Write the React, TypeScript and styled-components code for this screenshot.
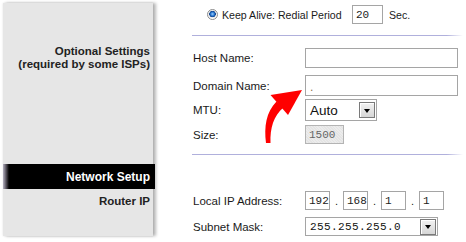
import React from "react";
import styled, { createGlobalStyle } from "styled-components";

const Global = createGlobalStyle`
  html, body { margin: 0; padding: 0; background: #ffffff; }
  body { font-family: "Liberation Sans", Arial, sans-serif; }
`;

const Page = styled.div`
  position: relative;
  display: flex;
  width: 466px;
  height: 242px;
  overflow: hidden;
  background: #ffffff;
`;

const Sidebar = styled.div`
  width: 150px;
  margin: 3px 0 6px 3px;
  padding-top: 42px;
  box-sizing: border-box;
  background: #e6e6e6;
  box-shadow: 0 0 2px rgba(0, 0, 0, 0.12), 3px 0 3px rgba(0, 0, 0, 0.28);
  display: flex;
  flex-direction: column;
`;

const SideTitle = styled.div<{ $top?: number }>`
  margin-top: ${(p) => p.$top ?? 0}px;
  padding-right: 3px;
  text-align: right;
  font-weight: bold;
  font-size: 11.5px;
  line-height: 13px;
  color: #222;
`;

const SectionBar = styled.div<{ $top: number }>`
  margin-top: ${(p) => p.$top}px;
  margin-right: -2px;
  height: 25px;
  display: flex;
  align-items: center;
  justify-content: flex-end;
  padding-right: 5px;
  background: linear-gradient(to right, #b4b0c0 0, #5a5660 3px, #000 6px);
  color: #fff;
  font-weight: bold;
  font-size: 12px;
`;

const Main = styled.div`
  flex: 1;
  padding: 0 3px 0 39px;
  display: flex;
  flex-direction: column;
`;

const Row = styled.div<{ $top: number; $h: number; $indent?: number; $fs?: number }>`
  margin-top: ${(p) => p.$top}px;
  height: ${(p) => p.$h}px;
  padding-left: ${(p) => p.$indent ?? 1}px;
  display: flex;
  align-items: center;
  font-size: ${(p) => p.$fs ?? 11.5}px;
  color: #1a1a1a;
`;

const Divider = styled.div<{ $top: number }>`
  margin-top: ${(p) => p.$top}px;
  height: 1px;
  background: linear-gradient(to right, #b0b0dc 0, #b0b0dc 94%, #ffffff 100%);
`;

const Label = styled.span<{ $w: number }>`
  width: ${(p) => p.$w}px;
  flex-shrink: 0;
  white-space: nowrap;
`;

const Radio = styled.span`
  width: 11px;
  height: 11px;
  box-sizing: border-box;
  border-radius: 50%;
  border: 1px solid #8c8c8c;
  background: radial-gradient(circle at 50% 45%, #9ed0ff 0, #2a78d0 28%, #0c3e8a 45%, #e8e8e8 52%, #ffffff 70%);
  margin-right: 4px;
  flex-shrink: 0;
`;

const TextBox = styled.div<{ $w: number; $h: number; $disabled?: boolean }>`
  width: ${(p) => p.$w}px;
  height: ${(p) => p.$h}px;
  box-sizing: border-box;
  border: 1px solid ${(p) => (p.$disabled ? "#b4b4b4" : "#a5a5a5")};
  background: ${(p) =>
    p.$disabled
      ? "repeating-linear-gradient(45deg, #e4e4e4 0, #e4e4e4 1px, #ececec 1px, #ececec 2px)"
      : "#ffffff"};
  display: flex;
  align-items: center;
  padding-left: 3px;
  flex-shrink: 0;
  font-family: "Liberation Mono", "Courier New", monospace;
  font-size: 11px;
  color: ${(p) => (p.$disabled ? "#666" : "#222")};
`;

const SmallDot = styled.span`
  font-size: 9px;
  color: #8a6a40;
  margin-top: 6px;
`;

const After = styled.span<{ $gap: number }>`
  margin-left: ${(p) => p.$gap}px;
`;

const Select = styled.div<{ $w: number; $h: number; $mono?: boolean }>`
  width: ${(p) => p.$w}px;
  height: ${(p) => p.$h}px;
  box-sizing: border-box;
  border: 1px solid #a5a5a5;
  background: #fff;
  display: flex;
  align-items: center;
  justify-content: space-between;
  padding: 0 1px 0 4px;
  font-family: ${(p) =>
    p.$mono ? `"Liberation Mono", "Courier New", monospace` : `"Liberation Sans", Arial, sans-serif`};
  font-size: ${(p) => (p.$mono ? 11 : 13.5)}px;
  letter-spacing: ${(p) => (p.$mono ? 0.4 : 0)}px;
  color: #111;
`;

const DropButton = styled.span`
  width: 16px;
  height: 16px;
  box-sizing: border-box;
  border: 1px solid #7a7a7a;
  background: linear-gradient(#f2f2f2, #d6d6d6);
  box-shadow: inset 1px 1px 0 #fff;
  display: flex;
  align-items: center;
  justify-content: center;
`;

const Triangle = styled.span`
  width: 0;
  height: 0;
  border-left: 3.5px solid transparent;
  border-right: 3.5px solid transparent;
  border-top: 4px solid #000;
  margin-top: 1px;
`;

const IpDot = styled.span`
  width: 13px;
  text-align: center;
  font-size: 11px;
`;

const Arrow = styled.svg`
  position: absolute;
  left: 0;
  top: 0;
  pointer-events: none;
`;

const ipParts = ["192", "168", "1", "1"];

export default function App() {
  return (
    <>
      <Global />
      <Page>
        <Sidebar>
          <SideTitle>
            Optional Settings
            <br />
            (required by some ISPs)
          </SideTitle>
          <SectionBar $top={93}>Network Setup</SectionBar>
          <SideTitle $top={6}>Router IP</SideTitle>
        </Sidebar>
        <Main>
          <Row $top={5} $h={19} $indent={15} $fs={10.6}>
            <Radio />
            <Label $w={130}>Keep Alive: Redial Period</Label>
            <TextBox $w={31} $h={19}>
              20
            </TextBox>
            <After $gap={6}>Sec.</After>
          </Row>
          <Divider $top={11} />
          <Row $top={12} $h={20}>
            <Label $w={112}>Host Name:</Label>
            <TextBox $w={153} $h={20} />
          </Row>
          <Row $top={7} $h={21}>
            <Label $w={112}>Domain Name:</Label>
            <TextBox $w={153} $h={21}>
              <SmallDot>.</SmallDot>
            </TextBox>
          </Row>
          <Row $top={3} $h={22}>
            <Label $w={112}>MTU:</Label>
            <Select $w={72} $h={22}>
              Auto
              <DropButton>
                <Triangle />
              </DropButton>
            </Select>
          </Row>
          <Row $top={4} $h={19}>
            <Label $w={112}>Size:</Label>
            <TextBox $w={39} $h={19} $disabled>
              1500
            </TextBox>
          </Row>
          <Divider $top={10} />
          <Row $top={36} $h={19}>
            <Label $w={112}>Local IP Address:</Label>
            {ipParts.map((v, i) => (
              <React.Fragment key={i}>
                {i > 0 && <IpDot>.</IpDot>}
                <TextBox $w={25} $h={19}>
                  {v}
                </TextBox>
              </React.Fragment>
            ))}
          </Row>
          <Row $top={7} $h={19}>
            <Label $w={112}>Subnet Mask:</Label>
            <Select $w={133} $h={19} $mono>
              255.255.255.0
              <DropButton>
                <Triangle />
              </DropButton>
            </Select>
          </Row>
        </Main>
        <Arrow width="466" height="242" viewBox="0 0 466 242">
          <path
            d="M266 143 C264 127 266 112 276.5 101.5 L283.5 107.5 C273.5 116 270 128 270.5 143 Z"
            fill="#ff0000"
          />
          <polygon points="302,90 270.5,95 288,115" fill="#ff0000" />
        </Arrow>
      </Page>
    </>
  );
}
